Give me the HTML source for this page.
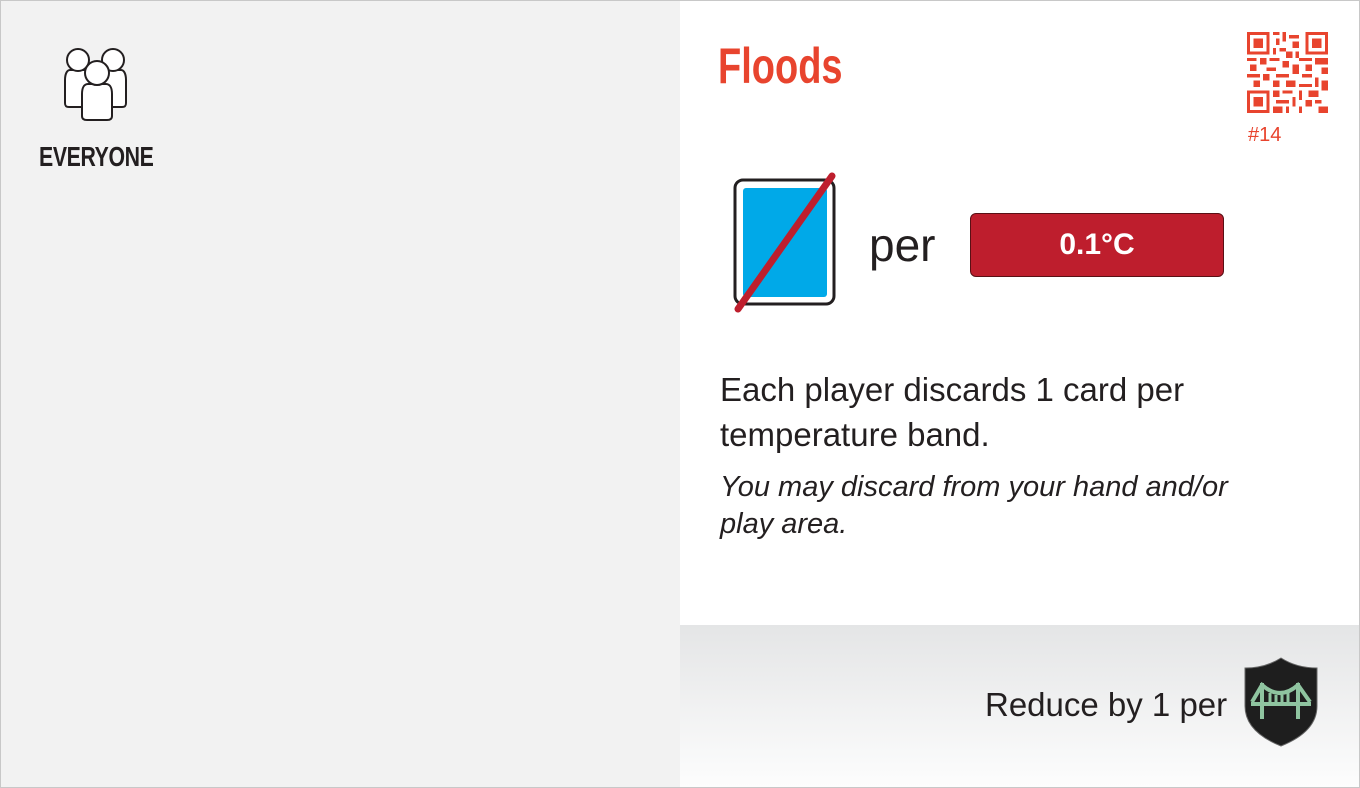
<!DOCTYPE html>
<html><head><style>
*{margin:0;padding:0;box-sizing:border-box}
body{width:1360px;height:788px;position:relative;overflow:hidden;background:#fff;font-family:"Liberation Sans",sans-serif;color:#231f20}
#frame{position:absolute;left:0;top:0;width:1360px;height:788px;border:1px solid #c8c8c8}
#left{position:absolute;left:1px;top:1px;width:679px;height:786px;background:#f2f2f2}
#bottom{position:absolute;left:680px;top:625px;width:679px;height:162px;background:linear-gradient(#e4e5e6,#fdfdfd)}
.t{position:absolute;white-space:nowrap}
</style></head><body>
<div id="left"></div>
<div id="bottom"></div>
<svg class="t" style="left:60px;top:44px" width="74" height="80" viewBox="0 0 74 80">
<g fill="#fff" stroke="#231f20" stroke-width="2">
<path d="M10 26h16c3 0 5 4 5 10v23c0 3-1 4-4 4H9c-3 0-4-1-4-4V36c0-6 2-10 5-10z"/>
<circle cx="18" cy="16" r="11"/>
<path d="M45 26h16c3 0 5 4 5 10v23c0 3-1 4-4 4H44c-3 0-4-1-4-4V36c0-6 2-10 5-10z"/>
<circle cx="53" cy="16" r="11"/>
<path d="M28 40h18c4 0 6 4 6 10v22c0 3-2 4-5 4H27c-3 0-5-1-5-4V50c0-6 2-10 6-10z"/>
<circle cx="37" cy="29" r="12"/>
</g></svg>
<div class="t" style="left:39px;top:141px;font-weight:bold;font-size:28px;letter-spacing:-0.5px;transform:scaleX(0.76);transform-origin:0 0">EVERYONE</div>
<div class="t" style="left:718px;top:37px;font-weight:bold;font-size:50px;color:#e8442e;transform:scaleX(0.76);transform-origin:0 0">Floods</div>
<svg class="t" style="left:1247px;top:32px" width="81" height="81" viewBox="0 0 25 25" shape-rendering="crispEdges">
<g fill="#e8442e">
<path d="M0 0h7v7H0zM18 0h7v7h-7zM0 18h7v7H0z"/>
</g>
<g fill="#fff"><path d="M1 1h5v5H1zM19 1h5v5h-5zM1 19h5v5H1z"/></g>
<g fill="#e8442e"><path d="M2 2h3v3H2zM20 2h3v3h-3zM2 20h3v3H2z"/>
<path d="M8 0h2v1H8zM11 0h1v3h-1zM13 1h3v1h-3zM9 2h1v2H9zM14 3h2v2h-2zM8 5h1v2H8zM10 5h2v1h-2zM12 6h2v2h-2zM15 6h1v2h-1zM0 8h3v1H0zM4 8h2v2H4zM7 8h3v1H7zM11 9h2v2h-2zM16 8h4v1h-4zM21 8h4v2h-4zM1 10h2v2H1zM6 11h3v1H6zM14 10h2v3h-2zM18 10h2v2h-2zM23 11h2v2h-2zM0 13h4v1H0zM5 13h2v2H5zM9 13h4v1H9zM17 13h3v1h-3zM21 14h1v3h-1zM2 15h2v2H2zM8 15h2v2H8zM12 15h3v2h-3zM16 16h4v1h-4zM23 15h2v3h-2zM8 18h2v2H8zM11 18h3v1h-3zM16 18h1v3h-1zM19 18h3v2h-3zM9 21h4v1H9zM14 20h1v3h-1zM18 21h2v2h-2zM21 21h2v1h-2zM8 23h3v2H8zM12 23h1v2h-1zM16 23h1v2h-1zM22 23h3v2h-3z"/></g>
</svg>
<div class="t" style="left:1248px;top:124px;font-size:20px;color:#e8442e">#14</div>
<svg class="t" style="left:730px;top:170px" width="110" height="145" viewBox="0 0 110 145">
<rect x="5" y="10" width="99" height="124" rx="8" fill="#fff" stroke="#231f20" stroke-width="3"/>
<rect x="13" y="18" width="84" height="109" rx="3" fill="#00a9e8"/>
<line x1="8" y1="139" x2="102" y2="6" stroke="#be1e2d" stroke-width="7" stroke-linecap="round"/>
</svg>
<div class="t" style="left:869px;top:218px;font-size:46px">per</div>
<div class="t" style="left:970px;top:213px;width:254px;height:64px;background:#be1e2d;border:1px solid #5a1015;border-radius:6px;color:#fff;font-weight:bold;font-size:30px;text-align:center;line-height:62px">0.1°C</div>
<div class="t" style="left:720px;top:367px;font-size:33px;line-height:45px">Each player discards 1 card per<br>temperature band.</div>
<div class="t" style="left:720px;top:469px;font-size:29px;line-height:37px;font-style:italic">You may discard from your hand and/or<br>play area.</div>
<div class="t" style="left:985px;top:686px;font-size:33px">Reduce by 1 per</div>
<svg class="t" style="left:1243px;top:657px" width="76" height="90" viewBox="0 0 76 90">
<path d="M38 1C27 8 14 11 2 11v38c0 20 16 32 36 40 20-8 36-20 36-40V11C62 11 49 8 38 1z" fill="#1e1e1e" stroke="#666" stroke-width="1"/>
<g stroke="#8fc4a0" stroke-width="4" fill="none">
<line x1="8" y1="47" x2="68" y2="47"/>
<line x1="19" y1="26" x2="19" y2="62"/><line x1="55" y1="26" x2="55" y2="62"/>
<path d="M9 45 19 28Q37 44 55 28L67 45"/>
</g>
<g stroke="#8fc4a0" stroke-width="3"><line x1="27" y1="36" x2="27" y2="47"/><line x1="33" y1="38" x2="33" y2="47"/><line x1="39" y1="38" x2="39" y2="47"/><line x1="45" y1="36" x2="45" y2="47"/></g>
</svg>
<div id="frame"></div>
</body></html>
